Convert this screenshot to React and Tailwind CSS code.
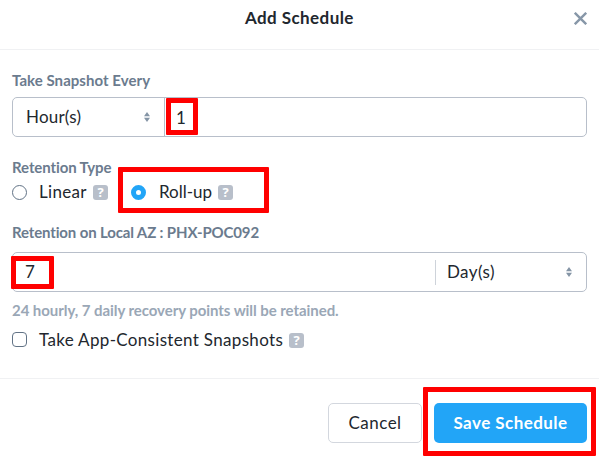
function Help({ className = '' }) {
  return (
    <span className={`flex h-[15px] w-[15px] shrink-0 items-center justify-center rounded-[3px] bg-[#b8bfca] font-['Open_Sans','Lato',sans-serif] text-[13px] leading-none font-bold text-white ${className}`}>
      ?
    </span>
  );
}

function Caret() {
  return (
    <svg width="6" height="10" viewBox="0 0 6 10" className="shrink-0" fill="#8595a6">
      <path d="M3 0 6 4.2H0zM3 10 0 5.8h6z" />
    </svg>
  );
}

function Highlight({ className }) {
  return <div className={`pointer-events-none absolute rounded-[1px] border-[5px] border-[#ff0000] ${className}`} />;
}

export default function App() {
  return (
    <div className="relative flex h-[457px] w-[599px] flex-col overflow-hidden bg-white font-['Lato','Liberation_Sans',sans-serif] text-[17px] whitespace-nowrap text-[#22272e]">
      <header className="flex h-[50px] shrink-0 items-start border-b border-[#f0f1f3] pt-2">
        <h1 className="ml-[245px] w-[109px] text-[17px] leading-5 font-bold tracking-[0.42px]">Add Schedule</h1>
        <svg width="13" height="13" viewBox="0 0 13 13" className="mt-1 ml-[220px]" stroke="#8797a8" strokeWidth="2.4">
          <path d="M.8.8l11.4 11.4M12.2.8.8 12.2" />
        </svg>
      </header>

      <main className="flex h-[329px] shrink-0 flex-col border-b border-[#f0f1f3] px-3 pt-5">
        <div className="h-5 text-[15px] leading-5 font-bold tracking-[0.05px] text-[#6b7b8e]">Take Snapshot Every</div>
        <div className="mt-[7px] flex h-10 rounded-[5px] border border-[#b8bfca]">
          <div className="flex w-[152px] items-center justify-between border-r border-[#b8bfca] pr-[14px] pl-[13px]">
            <span className="tracking-[0.2px]">Hour(s)</span>
            <Caret />
          </div>
          <div className="flex items-center pt-px pl-[11px]">1</div>
        </div>

        <div className="mt-5 h-5 text-[15px] leading-5 font-bold tracking-[-0.1px] text-[#6b7b8e]">Retention Type</div>
        <div className="mt-[5px] flex h-5 items-center">
          <span className="h-[15px] w-[15px] rounded-full border border-[#627386]" />
          <span className="ml-3 w-[54px] leading-5 tracking-[0.3px]">Linear</span>
          <Help />
          <span className="ml-[23px] h-[15px] w-[15px] rounded-full border-[5px] border-[#22a5f7]" />
          <span className="ml-[13px] w-[59px] leading-5">Roll-up</span>
          <Help />
        </div>

        <div className="mt-5 h-5 text-[15px] leading-5 font-bold tracking-[-0.14px] text-[#6b7b8e]">Retention on Local AZ : PHX-POC092</div>
        <div className="mt-[10px] flex h-10 shrink-0 items-center rounded-[5px] border border-[#b8bfca]">
          <span className="w-[422px] pl-3">7</span>
          <div className="flex h-[25px] flex-1 items-center justify-between border-l border-[#ced3da] pr-[14px] pl-[11px]">
            <span className="tracking-[0.4px]">Day(s)</span>
            <Caret />
          </div>
        </div>

        <div className="mt-2 h-5 text-[15px] leading-5 font-bold tracking-[-0.06px] text-[#9aa7b6]">24 hourly, 7 daily recovery points will be retained.</div>
        <div className="mt-[10px] flex h-5 items-center">
          <span className="mb-[2px] h-[15px] w-[15px] rounded-[4px] border border-[#627386]" />
          <span className="ml-3 w-[250px] leading-5 tracking-[0.33px]">Take App-Consistent Snapshots</span>
          <Help className="mt-px" />
        </div>
      </main>

      <footer className="flex justify-end gap-3 pt-6 pr-3">
        <button className="h-10 w-[94px] rounded-[5px] border border-[#d3d7de] tracking-[0.5px]">Cancel</button>
        <button className="h-10 w-[153px] rounded-[5px] bg-[#22a5f7] font-bold tracking-[0.45px] text-white">Save Schedule</button>
      </footer>

      <Highlight className="top-[98px] left-[166px] h-[37px] w-8" />
      <Highlight className="top-[167px] left-[118px] h-[46px] w-[151px]" />
      <Highlight className="top-[256px] left-[11px] h-[33px] w-[43px]" />
      <Highlight className="top-[387px] left-[423px] h-[69px] w-[173px]" />
    </div>
  );
}
